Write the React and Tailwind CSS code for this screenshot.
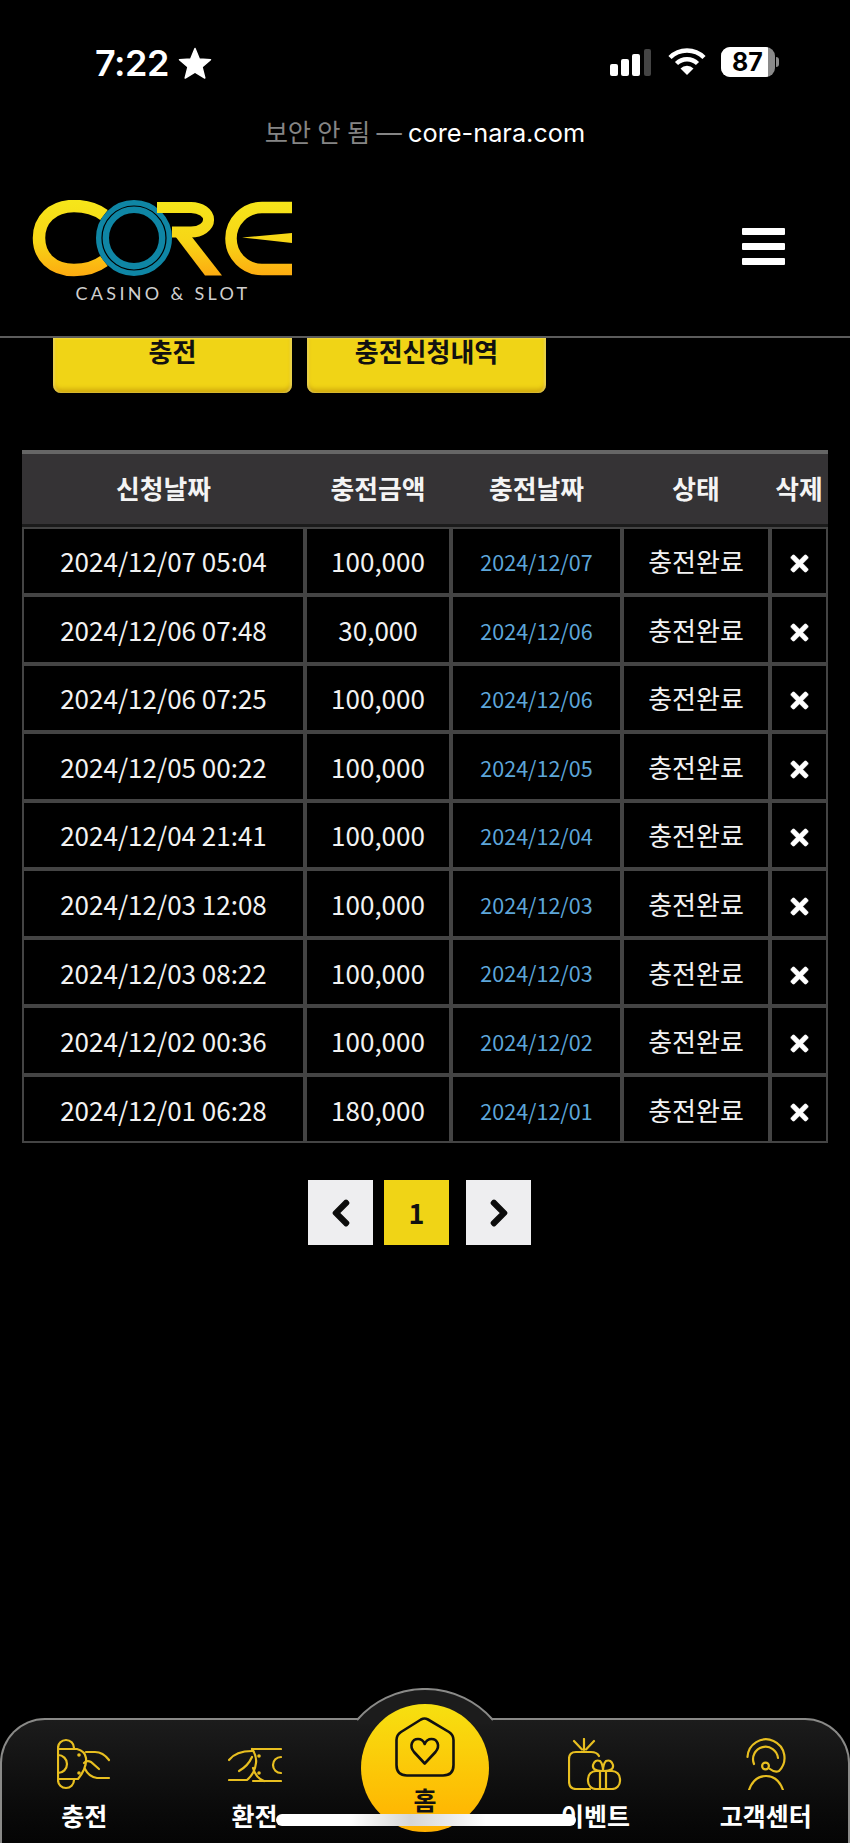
import { FaTimes, FaChevronLeft, FaChevronRight } from "react-icons/fa";

const rows = [
  ["2024/12/07 05:04", "100,000", "2024/12/07"],
  ["2024/12/06 07:48", "30,000", "2024/12/06"],
  ["2024/12/06 07:25", "100,000", "2024/12/06"],
  ["2024/12/05 00:22", "100,000", "2024/12/05"],
  ["2024/12/04 21:41", "100,000", "2024/12/04"],
  ["2024/12/03 12:08", "100,000", "2024/12/03"],
  ["2024/12/03 08:22", "100,000", "2024/12/03"],
  ["2024/12/02 00:36", "100,000", "2024/12/02"],
  ["2024/12/01 06:28", "180,000", "2024/12/01"],
];

const StatusBar = () => (
  <div className="relative h-[105px] shrink-0 font-['Inter','Noto_Sans_CJK_KR',sans-serif] text-white">
    <div className="flex items-center pl-[95px] pt-[44px]">
      <span className="text-[36px] leading-[38px] font-semibold tracking-[-0.5px]">7:22</span>
      <svg className="ml-[9px]" width="34" height="33" viewBox="0 0 34 33" fill="#fff" stroke="#fff" strokeWidth="1.5" strokeLinejoin="round">
        <path d="M17 1.5 L21.3 12 L32.5 12.8 L24 20 L26.8 31 L17 25 L7.2 31 L10 20 L1.5 12.8 L12.7 12 Z" />
      </svg>
    </div>
    <div className="absolute top-[47px] left-[610px] flex items-center">
      <svg width="42" height="28" viewBox="0 0 42 28">
        <rect x="0" y="16" width="8" height="12" rx="2" fill="#fff" />
        <rect x="11" y="11" width="8" height="17" rx="2" fill="#fff" />
        <rect x="22" y="6" width="8" height="22" rx="2" fill="#fff" />
        <rect x="34" y="1" width="7" height="27" rx="2" fill="#444" />
      </svg>
      <svg className="ml-[16px]" width="38" height="28" viewBox="0 0 38 28" fill="none" stroke="#fff" strokeWidth="4.5">
        <path d="M2 9.5 A24 24 0 0 1 36 9.5" />
        <path d="M8.5 15.5 A15 15 0 0 1 29.5 15.5" />
        <path d="M19 27 L12.5 20.5 A9 9 0 0 1 25.5 20.5 Z" fill="#fff" stroke="none" />
      </svg>
      <div className="relative ml-[15px] h-[30px] w-[54px] overflow-hidden rounded-[9px] bg-[#8a8a8a]">
        <div className="flex h-full w-[47px] items-center justify-center bg-white">
          <span className="pl-[6px] text-[25px] leading-none font-bold text-black">87</span>
        </div>
      </div>
      <div className="ml-[1px] h-[10px] w-[3px] rounded-r-full bg-[#8a8a8a]" />
    </div>
  </div>
);

const Logo = () => (
  <svg width="262" height="78" viewBox="32 200 262 78" fill="none">
    <defs>
      <linearGradient id="logoGold" gradientUnits="userSpaceOnUse" x1="0" y1="200" x2="0" y2="276">
        <stop offset="0" stopColor="#f6e61a" />
        <stop offset="0.55" stopColor="#f7d516" />
        <stop offset="1" stopColor="#fdab10" />
      </linearGradient>
    </defs>
    <path d="M104 215 C96 209 88 206 74 206 C52 206 39 220 39 238 C39 256 52 270 74 270 C88 270 96 267 104 261" stroke="url(#logoGold)" strokeWidth="12.5" />
    <circle cx="134" cy="238" r="31.5" stroke="#0f86a5" strokeWidth="13" />
    <circle cx="134" cy="238" r="32" stroke="#000" strokeWidth="1.2" />
    <path d="M157 207.5 H191 A17.5 12.2 0 0 1 191 232 H172" stroke="url(#logoGold)" strokeWidth="11" />
    <path d="M172 232 H188 L222 275.5 H205 Z" fill="url(#logoGold)" />
    <path d="M292 207.5 H262 A30.7 30.7 0 0 0 262 269.5 H292" stroke="url(#logoGold)" strokeWidth="11.5" />
    <path d="M242 237.5 L292 233 V243 Z" fill="url(#logoGold)" />
  </svg>
);

const Header = () => (
  <header className="flex h-[177px] shrink-0 items-start justify-between border-b-[2px] border-[#5c5c5c] pt-[39px] pr-[65px] pl-[32px]">
    <div className="flex flex-col items-center">
      <Logo />
      <span className="mt-[3px] font-['Lato',sans-serif] text-[18px] leading-[24px] tracking-[3.3px] text-[#cfcfcf]">
        CASINO &amp; SLOT
      </span>
    </div>
    <div className="mt-[28px] flex w-[43px] flex-col gap-[8px]">
      <span className="h-[7px] rounded-[1px] bg-white" />
      <span className="h-[7px] rounded-[1px] bg-white" />
      <span className="h-[7px] rounded-[1px] bg-white" />
    </div>
  </header>
);

const YellowButton = ({ children }) => (
  <button className="h-[55px] w-[239px] rounded-b-[8px] bg-[#f0d416] pb-[29px] text-[26px] leading-[26px] font-bold text-[#111] shadow-[inset_2px_0_2px_rgba(255,255,255,0.25),inset_-2px_0_2px_rgba(255,255,255,0.25),inset_0_-4px_4px_rgba(170,120,0,0.45)]">
    {children}
  </button>
);

const Th = ({ children }) => (
  <th className="h-[76.5px] border-t-[4px] border-b-[3px] border-t-[#666] border-b-[#1b1b1b] bg-[#353335] p-0 text-[25.8px] font-bold text-[#f4f4f4]">
    {children}
  </th>
);

const Td = ({ children, className = "text-[26px] text-[#f2f2f2]" }) => (
  <td className={`h-[68.55px] border-2 border-[#444] p-0 text-center ${className}`}>
    {children}
  </td>
);

const HistoryTable = () => (
  <table className="mt-[57px] ml-[22px] w-[806px] table-fixed border-separate border-spacing-0">
    <colgroup>
      <col className="w-[283px]" />
      <col className="w-[146px]" />
      <col className="w-[171px]" />
      <col className="w-[148px]" />
      <col className="w-[58px]" />
    </colgroup>
    <thead>
      <tr>
        <Th>신청날짜</Th>
        <Th>충전금액</Th>
        <Th>충전날짜</Th>
        <Th>상태</Th>
        <Th>삭제</Th>
      </tr>
    </thead>
    <tbody>
      {rows.map((row, idx) => (
        <tr key={idx}>
          <Td>{row[0]}</Td>
          <Td>{row[1]}</Td>
          <Td className="pt-[3px] text-[21.5px] text-[#5da6da]">{row[2]}</Td>
          <Td>충전완료</Td>
          <Td>
            <FaTimes className="mx-auto mt-[6px] size-[25px] stroke-[14px] text-white" />
          </Td>
        </tr>
      ))}
    </tbody>
  </table>
);

const Pagination = () => (
  <div className="mt-[37px] ml-[308px] flex">
    <button className="flex size-[65px] items-center justify-center bg-[#eeeef0] text-[#0c0c0c]">
      <FaChevronLeft className="size-[30px] stroke-[24px]" />
    </button>
    <button className="ml-[11px] flex size-[65px] items-center justify-center bg-[#f0d416] text-[27px] font-bold text-[#111]">
      1
    </button>
    <button className="ml-[17px] flex size-[65px] items-center justify-center bg-[#eeeef0] text-[#0c0c0c]">
      <FaChevronRight className="size-[30px] stroke-[24px]" />
    </button>
  </div>
);

const ChargeIcon = () => (
  <svg width="54" height="52" viewBox="0 0 54 52" fill="none" stroke="#e8bf20" strokeWidth="2.2" strokeLinecap="round">
    <path d="M1 10 A8 8 0 0 1 17 10 M1 42 A8 8 0 0 0 17 42 M1 10 V42" />
    <path d="M1 11 H20 Q28 13 29 20 Q30 30 21 41 H1" />
    <path d="M1 17 A9 9 0 0 1 1 35" />
    <circle cx="22" cy="17" r="1.8" fill="#e8bf20" stroke="none" />
    <circle cx="22" cy="35" r="1.8" fill="#e8bf20" stroke="none" />
    <path d="M29 14 H38 Q46 14 52 22" />
    <path d="M27 25 Q30 22 34 24 L42 31" />
    <path d="M28 31 Q32 39 40 40 H52" />
  </svg>
);

const ExchangeIcon = () => (
  <svg width="54" height="52" viewBox="0 0 54 52" fill="none" stroke="#e8bf20" strokeWidth="2.2" strokeLinecap="round">
    <g transform="translate(0 9)">
      <path d="M24 2 H53 M25 34 H53" />
      <path d="M53 10 A8 8 0 0 0 53 26" />
      <path d="M24 2 Q29 9 28 16 Q27 26 19 33 H1" />
      <path d="M1 13 Q8 4 24 4" />
      <path d="M11 24 Q20 19 24 10" />
      <path d="M25 21 Q28 31 36 34" />
      <circle cx="31" cy="9" r="1.8" fill="#e8bf20" stroke="none" />
      <circle cx="31" cy="26" r="1.8" fill="#e8bf20" stroke="none" />
    </g>
  </svg>
);

const EventIcon = () => (
  <svg width="54" height="52" viewBox="0 0 54 52" fill="none" stroke="#e8bf20" strokeWidth="2.2" strokeLinecap="round">
    <path d="M31 18 Q29 14 23 14 H8 Q1 14 1 21 V43 Q1 51 8 51 H22" />
    <path d="M16 1 V12 M6 3 L14 11.5 M26 3 L18 11.5" />
    <rect x="20" y="33" width="32" height="18" rx="8" />
    <path d="M32 33 V51 M38 33 V51" />
    <path d="M34 33 Q24 33 25 27 Q27 21 32 23 Q35 26 35 33 Q35 26 38 23 Q43 21 45 27 Q46 33 36 33" />
  </svg>
);

const SupportIcon = () => (
  <svg width="40" height="52" viewBox="0 0 40 52" fill="none" stroke="#e8bf20" strokeWidth="2.2" strokeLinecap="round">
    <path d="M1.5 19 A18.5 18.5 0 1 1 33 33 Q29 35 24 31" />
    <path d="M8 26 A12.5 12.5 0 1 1 32 20" />
    <circle cx="19.5" cy="28" r="3.4" />
    <path d="M3 52 Q8 38 20 38 Q32 38 37 52" />
  </svg>
);

const HomeIcon = () => (
  <svg width="60" height="60" viewBox="0 0 60 60" fill="none" stroke="#111" strokeWidth="2.6" strokeLinejoin="round">
    <path d="M26 2.5 Q29.5 0.5 33 2.5 L54 15 Q58.5 18 58.5 23 V48 Q58.5 58.5 48 58.5 H12 Q1.5 58.5 1.5 48 V23 Q1.5 18 6 15 Z" />
    <path d="M29.7 46.5 L19 35 C14 29 17 22 23 22 C26 22 28.5 24 29.7 27 C31 24 33.5 22 36.5 22 C42.5 22 45.5 29 40.5 35 Z" />
  </svg>
);

const NavItem = ({ icon, label }) => (
  <a className="flex flex-col items-center">
    <div className="flex h-[52px] items-center">{icon}</div>
    <span className="mt-[10px] text-[25px] leading-[30px] font-bold text-white">{label}</span>
  </a>
);

const BottomNav = () => (
  <nav className="relative mt-auto h-[125px] shrink-0 rounded-t-[45px] border-2 border-b-0 border-[#8a8a88] bg-linear-to-b from-[#1c1c1c] to-[#050505] pt-[18px]">
    <div className="-mx-[3px] grid grid-cols-5">
      <NavItem icon={<ChargeIcon />} label="충전" />
      <NavItem icon={<ExchangeIcon />} label="환전" />
      <div />
      <NavItem icon={<EventIcon />} label="이벤트" />
      <NavItem icon={<SupportIcon />} label="고객센터" />
    </div>
    <svg className="absolute -top-[32px] left-[355px]" width="136" height="36" viewBox="0 0 136 36">
      <path d="M0 33 A90 90 0 0 1 136 33 V36 H0 Z" fill="#1c1c1c" />
      <path d="M0 32 A90 90 0 0 1 136 32" fill="none" stroke="#8a8a88" strokeWidth="2" />
    </svg>
    <div className="absolute -top-[16px] left-[359px] flex size-[128px] flex-col items-center rounded-full bg-linear-to-b from-[#f6e010] to-[#ffb000] pt-[13px]">
      <HomeIcon />
      <span className="mt-[7px] text-[25px] leading-[30px] font-bold text-[#111]">홈</span>
    </div>
    <div className="absolute top-[94px] left-[274px] h-[12px] w-[300px] rounded-full bg-linear-to-r from-white from-25% via-[#d6d6d6] via-45% to-white to-70%" />
  </nav>
);

export default function App() {
  return (
    <div className="flex h-[1843px] w-[850px] flex-col overflow-hidden bg-black font-['Noto_Sans_CJK_KR',sans-serif]">
      <StatusBar />
      <div className="h-[56px] shrink-0 text-center font-['Inter','Noto_Sans_CJK_KR',sans-serif] text-[25.3px] leading-[56px]">
        <span className="tracking-[-0.4px] text-[#858585]">보안 안 됨 — </span>
        <span className="text-white">core-nara.com</span>
      </div>
      <Header />
      <main className="flex-1">
        <div className="flex gap-[15px] pl-[53px]">
          <YellowButton>충전</YellowButton>
          <YellowButton>충전신청내역</YellowButton>
        </div>
        <HistoryTable />
        <Pagination />
      </main>
      <BottomNav />
    </div>
  );
}
